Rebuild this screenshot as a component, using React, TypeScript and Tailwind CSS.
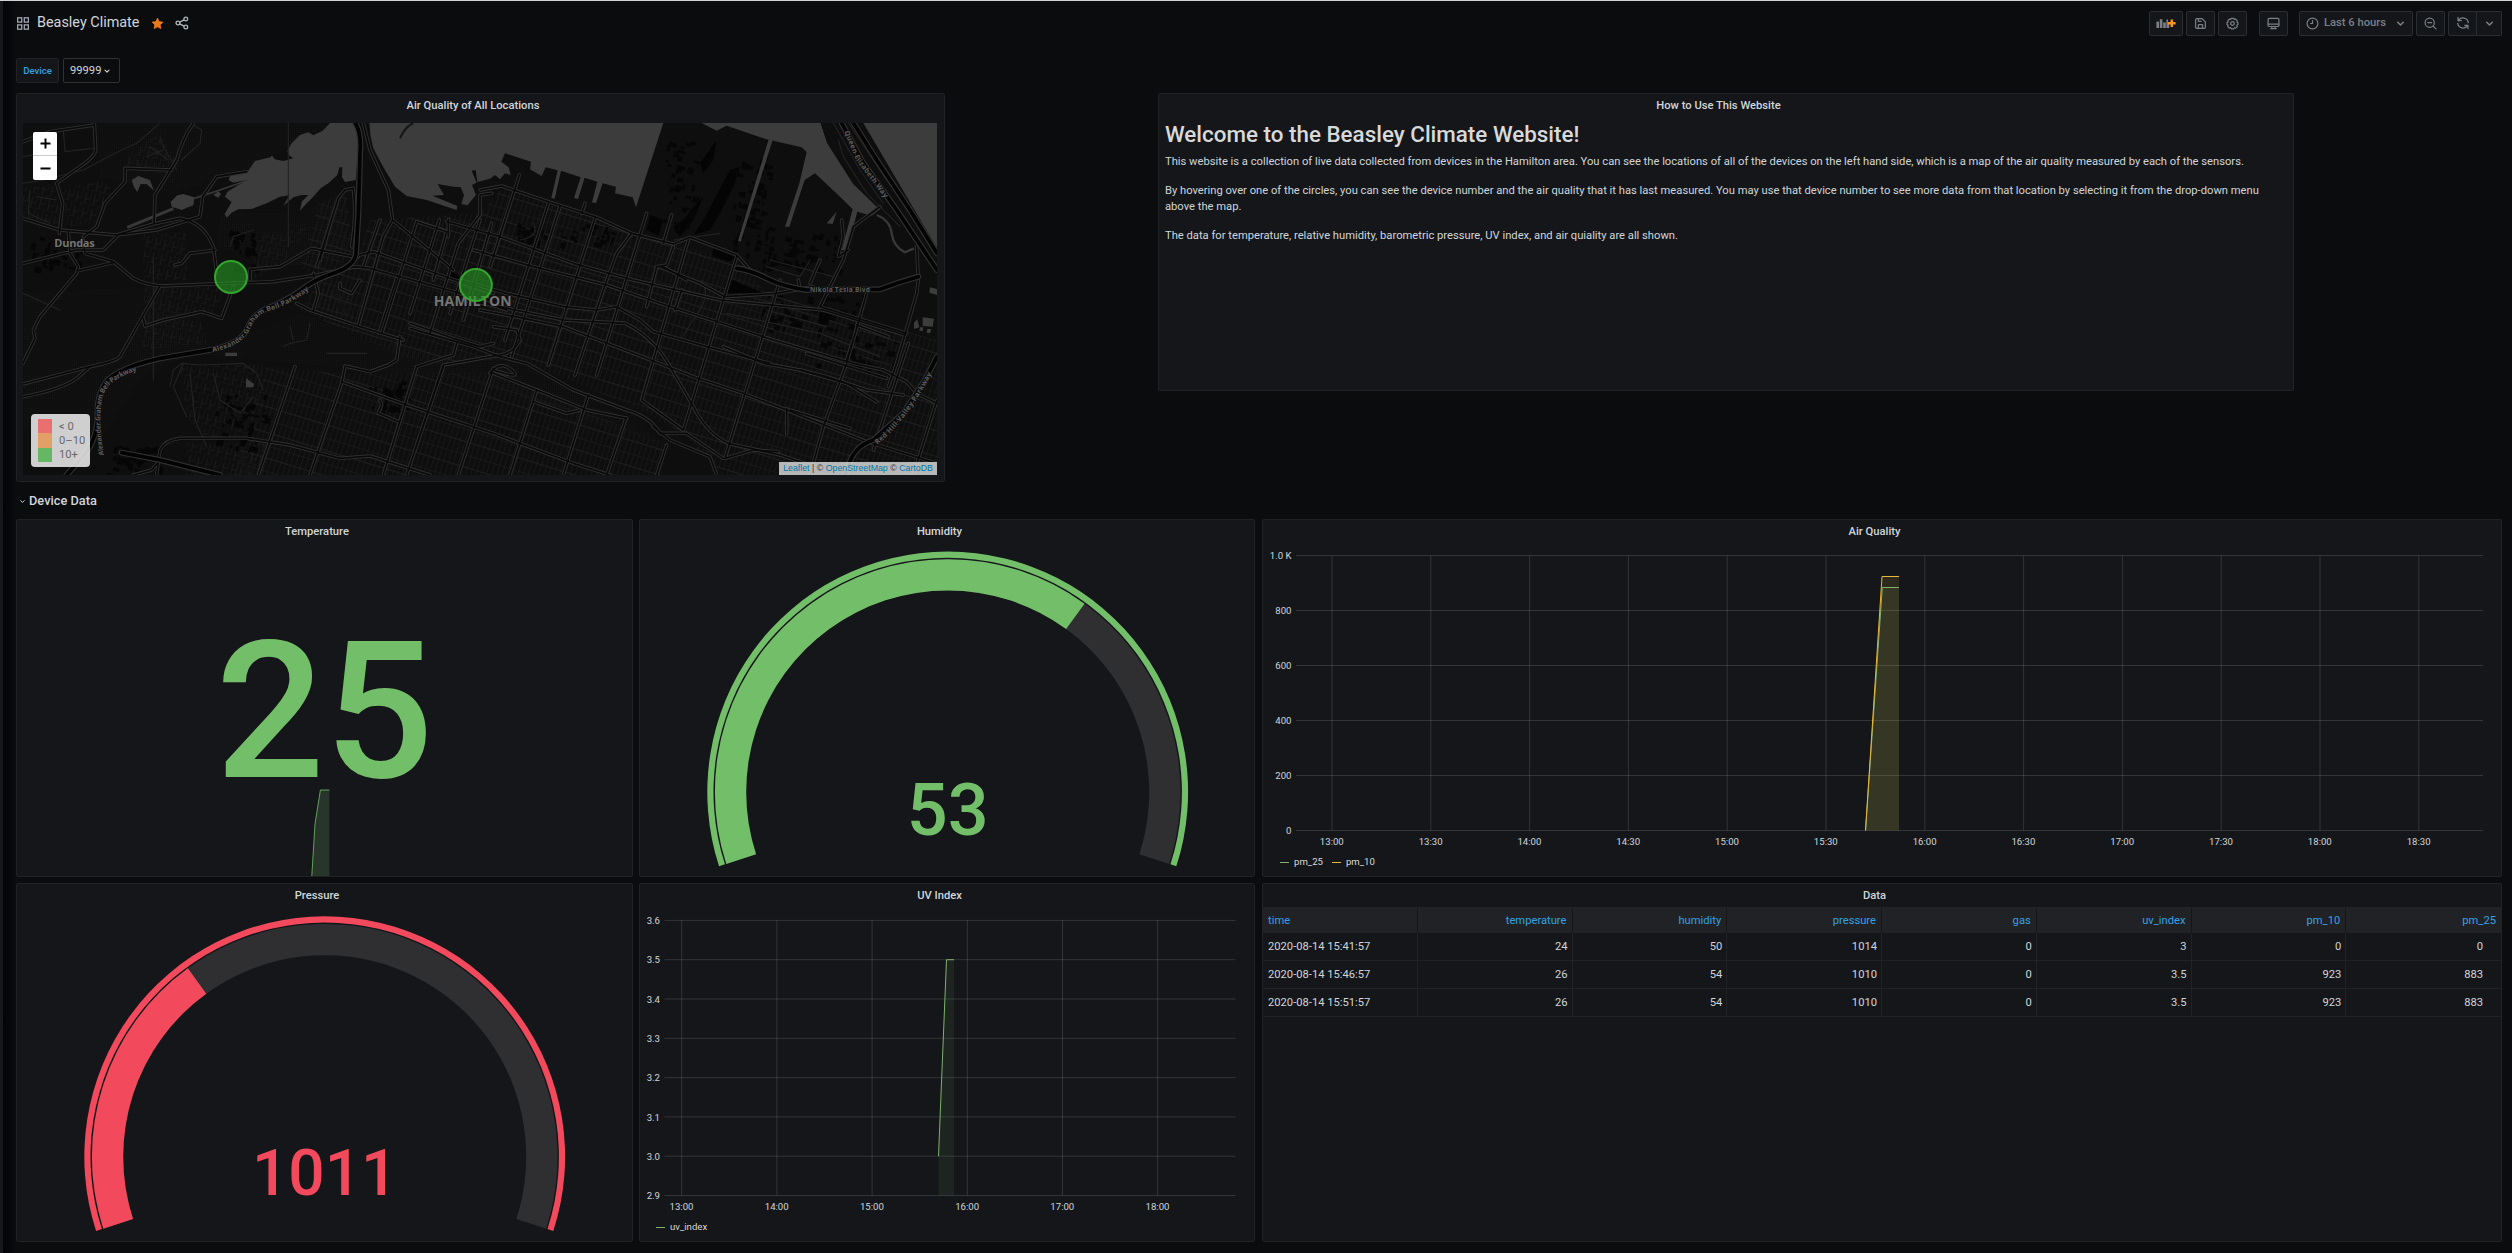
import React from "react";

/* ---------- icons ---------- */

type IconProps = { className?: string };

const AppsIcon = ({ className }: IconProps) => (
  <svg viewBox="0 0 12 13" className={className} fill="none" stroke="currentColor" strokeWidth="1.3">
    <rect x="0.6" y="0.8" width="4.1" height="4.3" />
    <rect x="7.3" y="0.8" width="4.1" height="4.3" />
    <rect x="0.6" y="7.9" width="4.1" height="4.3" />
    <rect x="7.3" y="7.9" width="4.1" height="4.3" />
  </svg>
);

const StarIcon = ({ className }: IconProps) => (
  <svg viewBox="0 0 24 24" className={className} fill="currentColor" stroke="currentColor" strokeWidth="1.6" strokeLinejoin="round">
    <path d="M12 2.2l2.9 6.4 7.1.9-5.2 4.8 1.3 7-6.1-3.4-6.1 3.4 1.3-7L2 9.5l7.1-.9z" />
  </svg>
);

const ShareIcon = ({ className }: IconProps) => (
  <svg viewBox="0 0 24 24" className={className} fill="none" stroke="currentColor" strokeWidth="2.2">
    <circle cx="18.5" cy="5" r="3.2" />
    <circle cx="18.5" cy="19" r="3.2" />
    <circle cx="5" cy="12" r="3.2" />
    <path d="M8 10.6l7.6-4M8 13.4l7.6 4" />
  </svg>
);

const ChevronIcon = ({ className }: IconProps) => (
  <svg viewBox="0 0 12 12" className={className} fill="none" stroke="currentColor" strokeWidth="1.7" strokeLinecap="round" strokeLinejoin="round">
    <path d="M3 4.6L6 7.6l3-3" />
  </svg>
);

const AddPanelIcon = ({ className }: IconProps) => (
  <svg viewBox="0 0 20 14" className={className}>
    <g fill="#7b8087">
      <rect x="0.4" y="5.6" width="2.6" height="6.4" />
      <rect x="3.8" y="3.2" width="2.6" height="8.8" />
      <rect x="7.2" y="6.4" width="2.6" height="5.6" />
      <path d="M10.4 3.4h1.6v3h1.2v5.6h-2.8z" />
    </g>
    <path d="M14.6 3.4h2.4v2.6h2.6v2.4H17V11h-2.4V8.400h-2.600V6h2.600z" fill="#f7941e" />
  </svg>
);

const SaveIcon = ({ className }: IconProps) => (
  <svg viewBox="0 0 24 24" className={className} fill="none" stroke="currentColor" strokeWidth="2.2" strokeLinejoin="round">
    <path d="M5 3h10l6 6v10a2 2 0 0 1-2 2H5a2 2 0 0 1-2-2V5a2 2 0 0 1 2-2z" />
    <path d="M8 3v5h6M8 21v-6a1 1 0 0 1 1-1h6a1 1 0 0 1 1 1v6" />
  </svg>
);

const GearIcon = ({ className }: IconProps) => (
  <svg viewBox="0 0 24 24" className={className} fill="none" stroke="currentColor" strokeWidth="2.2" strokeLinejoin="round">
    <path d="M9.700 2.500h4.600l1.200 2.100 2.400-.6 2.900 3-.7 2.400 1.900 1.300v3.200l-2 1.200.700 2.400-2.900 3-2.400-.7-1.200 2h-4.400l-1.300-2.100-2.400.700-2.900-3 .700-2.400-2-1.200v-3.200l2-1.200-.700-2.400 2.900-3 2.400.6z" />
    <circle cx="12" cy="12" r="3.400" />
  </svg>
);

const MonitorIcon = ({ className }: IconProps) => (
  <svg viewBox="0 0 24 24" className={className} fill="none" stroke="currentColor" strokeWidth="2.2" strokeLinejoin="round" strokeLinecap="round">
    <rect x="2" y="2.500" width="20" height="15" rx="2" />
    <path d="M2 13h20M9 18v3.500M15 18v3.500M7 21.500h10" />
  </svg>
);

const ClockIcon = ({ className }: IconProps) => (
  <svg viewBox="0 0 24 24" className={className} fill="none" stroke="currentColor" strokeWidth="2.2" strokeLinecap="round">
    <circle cx="12" cy="12" r="10" />
    <path d="M12 6.500V12H8.500" />
  </svg>
);

const ZoomOutIcon = ({ className }: IconProps) => (
  <svg viewBox="0 0 24 24" className={className} fill="none" stroke="currentColor" strokeWidth="2.2" strokeLinecap="round">
    <circle cx="10.500" cy="10.500" r="8.500" />
    <path d="M7 10.500h7M16.800 16.800L22 22" />
  </svg>
);

const SyncIcon = ({ className }: IconProps) => (
  <svg viewBox="0 0 24 24" className={className} fill="none" stroke="currentColor" strokeWidth="2.2" strokeLinecap="round" strokeLinejoin="round">
    <path d="M3.500 2.500v5.500H9M4.200 8a9 9 0 0 1 16.800 3.500M20.500 21.500V16H15M19.800 16A9 9 0 0 1 3 12.500" />
  </svg>
);

/* ---------- shared pieces ---------- */

function ToolButton({ className = "", children }: { className?: string; children: React.ReactNode }) {
  return (
    <div className={`flex h-[25px] items-center justify-center rounded-[2px] border border-[#2b2d31] bg-[#141619] text-[#7b8087] ${className}`}>
      {children}
    </div>
  );
}

function Panel({ title, className = "", children }: { title: string; className?: string; children?: React.ReactNode }) {
  return (
    <section className={`flex flex-col overflow-hidden rounded-[2px] border border-[#202226] bg-[#141619] ${className}`}>
      <h2 className="flex h-[24px] shrink-0 items-center justify-center pr-[15px] text-[11.2px] font-medium leading-none text-[#d0d6dc]">
        {title}
      </h2>
      {children}
    </section>
  );
}

/* ---------- map ---------- */

const WATER = [
  "M862 212L875 190 900 165 925 157 940 166 968 152 990 129H1060L1077 165 1072 240 1067 300 1035 306 1026 292 1027 262 1018 262 1012 285 985 310 962 325 940 350 918 372 900 392 905 365 925 345 905 345 880 352 850 378 868 346 840 350 800 370 755 387 715 388 695 398 680 413 674 402 695 366 675 350 682 335 740 300 700 308 686 300 690 288 745 272 765 243 812 232 816 226 824 238 850 243 880 235 866 225Z",
  "M1108 129L1112 170 1120 205 1150 262 1185 320 1220 348 1280 360 1370 390 1372 378 1298 347 1332 345 1313 312 1360 320 1382 322 1392 345 1384 372 1402 376 1428 345 1416 315 1430 308 1415 272 1427 270 1432 306 1470 296 1485 285 1500 298 1515 280 1532 285 1526 262 1504 245 1515 220 1593 245 1590 268 1625 288 1637 262 1673 271 1654 354 1664 356 1683 272 1742 292 1722 354 1734 357 1754 293 1792 305 1776 367 1788 370 1808 310 1848 320 1845 340 1898 352 1908 382 1990 129Z",
  "M2105 129L2150 152 2180 137 2300 178 2405 202 2420 216 2398 310 2355 440 2368 440 2414 300 2445 280 2520 350 2558 388 2525 510 2541 510 2572 395 2615 407 2640 388 2630 380 2560 312 2482 190 2462 129Z",
  "M2588 129H2811V505L2760 425 2690 315Z",
  "M512 366L532 346 550 342 583 352 580 376 545 390 515 380Z",
  "M395 300L415 288 450 300 462 332 440 312 422 312 412 336 402 322Z",
  "M2306 178L2318 180 2222 485 2214 482Z",
  "M640 345L655 334 663 342 655 353Z",
  "M2742 728L2752 718 2758 742 2742 747ZM2768 712L2802 716 2798 740 2768 738ZM2790 622L2811 627V645L2788 638ZM2760 742L2770 742 2768 754 2758 752ZM2782 746L2794 748 2790 760 2780 758Z",
  "M738 895L762 912 760 922 738 922ZM676 818H711V828H676ZM2480 430L2510 395 2498 432Z",
];

const DARK_AREAS = [
  "M2188 596L2290 640 2180 640Z",
  "M2140 505L2210 525 2190 545 2135 528Z",
  "M1950 405L1990 420 1975 465 1940 450Z",
  "M2020 440L2050 420 2080 380 2110 350 2080 420 2040 470Z",
  "M2160 400L2200 320 2220 260 2190 270 2110 420 2080 465 2130 450Z",
  "M2100 250L2150 180 2140 240 2110 280Z",
  "M2460 700L2490 700 2480 735 2455 730Z",
  "M1355 575L1380 590 1370 610 1350 600Z",
];

const HIGHWAYS = [
  "M1066 129Q1085 160 1080 220L1078 300 1075 400 1068 520Q1064 558 1000 580Q940 600 905 630Q850 668 790 690Q755 710 740 750Q720 790 640 808L480 835Q330 870 310 920Q290 960 293 1000Q295 1080 240 1140L200 1185",
  "M2525 129L2590 250 2690 390 2811 570",
  "M2560 129L2630 240 2730 390 2811 520",
  "M2210 565Q2250 570 2300 595T2420 630L2640 628Q2700 605 2755 590",
  "M2811 830L2775 900 2710 1000 2620 1080Q2560 1100 2545 1160L2535 1185",
  "M365 1118L480 1140 640 1180 660 1185",
];

const ROADS = [
  "M69 185L150 155 283 135M283 129L287 210Q285 230 240 260L170 310 188 370 178 460",
  "M580 129Q545 180 530 240L465 345 462 430M515 270L375 265 375 305 315 370 290 440 250 470",
  "M69 415L180 450 350 465 460 432 540 415Q610 425 640 500L650 580",
  "M350 465L470 450 600 410 608 350 650 290 740 275",
  "M69 550L230 510 310 510 350 470M205 455L210 520 235 560 230 580 120 710 100 750 105 775 69 850",
  "M250 480L255 520 340 545 400 595Q430 612 480 618L820 605 950 585 1065 560 1110 565 1380 640 1520 690",
  "M235 572L340 548M480 618L430 705 360 830Q345 845 270 860L69 912",
  "M69 950Q180 930 230 895L270 860M430 715L435 738 490 720 605 695 665 715 700 620",
  "M525 555L545 550 570 520 610 515 645 510M750 600L750 568 840 560 935 505 1060 530 1120 515 1220 550 1480 640",
  "M890 670L930 690 1080 740 1210 780M940 580L955 640 940 690M1020 610V625L1055 640 1080 600",
  "M1090 129L1110 210 1165 330 1178 420 1360 570M1178 420L1150 470 1075 735M1075 530L1060 500",
  "M1060 325L1035 330 1015 355 950 560M1060 325Q1070 400 1055 500M1000 400L960 540M1140 420L1090 560",
  "M1250 425L1145 760M1190 595L1140 750M1250 425L1340 455 1300 600M1318 420L1230 700M1345 418L1345 470",
  "M1475 340L1440 345V405L1375 490 1290 760M1440 420L1350 700M1475 430L1390 720",
  "M1440 330L1505 318 1645 365 1790 412 1895 460 2020 492 2070 472 2210 525 2250 570",
  "M1340 425L1500 470 1720 550 1900 600 2160 660 2470 690 2715 765",
  "M1420 510L1600 560 1820 615 1980 670 2320 780 2560 850 2650 870 2720 905 2750 940 2811 970",
  "M1380 600L1520 640 1690 680 1790 690 1850 680 1920 720 1960 755 2120 800 2310 850",
  "M1400 660L1545 690 1690 720 1875 730Q1960 770 2010 860L2080 980Q2120 1060 2185 1090L2340 1125 2460 1165",
  "M1230 730L1360 775 1440 800 1480 790M1480 740L1550 750 1560 780Q1540 820 1500 825L1330 855 1245 1110",
  "M1230 745L1420 800 1500 830 1580 850 1720 930 1880 990Q1950 1010 1980 1060L2060 1060 2170 1135",
  "M1440 690L1545 710 1690 740 1900 820 2080 890 2230 940 2360 990 2600 1085 2811 1150",
  "M1558 285L1470 560M1645 370L1515 780M1680 380L1535 830M1785 415L1645 855M1755 370L1745 400",
  "M1895 460L1850 520 1815 615 1725 885M1940 400L1790 885M2015 405L1990 490",
  "M2065 480L1925 960 2050 1050M2210 530L2050 1050M2340 600L2175 1135M2175 1135L2260 1110 2335 1115",
  "M2600 640L2540 850 2470 1040 2430 1185M2490 620L2460 680 2720 760M2580 715L2540 840",
  "M2360 985L2360 1060M2725 790L2620 1110M2640 380L2560 440 2530 540 2460 680",
  "M2750 500L2755 600 2750 640 2690 850 2665 920M2811 960L2740 1185M2400 870L2480 890 2600 930 2710 945",
  "M885 860L775 1185M1035 860L1025 910 930 1185M1200 770L1190 840 1165 855 1110 875 1035 858",
  "M1250 860L1150 1185M1330 860L1220 1185M1480 865L1375 1185M1610 930L1530 1185M1765 945L1690 1185",
  "M1878 1015L1820 1185M2000 1095L1970 1185M1250 860L1360 825 1370 790",
  "M1025 905L1220 975 1480 1060 1720 1150 1830 1185M1480 880L1610 930 1760 990 1880 1015",
  "M470 1185L480 1110Q495 1080 540 1075L740 1075 870 1095 1020 1135 1110 1128 1290 1185",
  "M400 1185L455 1170 480 1140M1140 960L1145 975 1135 1000 1195 1025M1470 880Q1500 840 1535 870T1480 870",
  "M1940 680L1970 560 2000 555 2020 500M1980 560L2100 610 2175 650 2330 640 2440 620",
  "M2045 630L2025 690M1990 560L2060 600M2170 800L2290 850 2400 870 2540 910 2630 965M2370 990L2550 1045",
  "M2420 820L2660 895M2570 735L2665 770M2395 600L2400 630M2460 540L2430 610M2525 420L2530 470 2515 530 2545 510",
  "M1600 965L1700 1000 1740 990M1960 1040L2010 1080 2130 1130 2150 1185",
];

const MINOR = [
  "M69 310L130 300 250 270 345 220 410 190 480 129M190 150L195 215 280 205M690 500L700 470 760 450",
  "M545 240L600 190 605 150 580 135M69 230L160 215M480 180L530 270M450 200L505 240M440 230L490 210M110 350L170 360M90 330L85 400 150 430",
  "M510 920L520 870 545 850 600 855 730 850 770 880 790 930M570 880L585 1020 620 1100M550 850L520 920 560 1010",
  "M640 880L660 960 720 1000 760 950M850 800L870 790 920 780 930 730M870 740L880 780M980 820L1100 820",
  "M2020 480L2160 460M2300 560L2400 590 2430 540M1600 430Q1620 470 1560 480M2310 540L2500 590M2105 600Q2130 640 2100 690L2040 780",
  "M2290 640L2460 690M2180 700L2460 760 2640 830M2300 690L2480 740M69 640L180 690M460 540V900M865 129V500",
  "M2515 180L2530 230 2600 340 2700 440M2545 129L2660 300 2790 470M2500 129L2580 270 2650 370",
];

/** Small deterministic generator so that the building footprints never move. */
function footprints(seed: number, n: number, x0: number, y0: number, w: number, h: number) {
  let s = seed;
  const rnd = () => {
    s = (s * 1103515245 + 12345) % 2147483648;
    return s / 2147483648;
  };
  return Array.from({ length: n }, () => ({
    x: Math.round(x0 + rnd() * w),
    y: Math.round(y0 + rnd() * h),
    w: Math.round(5 + rnd() * 16),
    h: Math.round(5 + rnd() * 16),
  }));
}

const BUILDINGS = [
  ...footprints(7, 60, 2290, 640, 300, 110),
  ...footprints(11, 70, 2200, 220, 110, 300),
  ...footprints(23, 50, 2290, 460, 230, 110),
  ...footprints(31, 40, 1990, 180, 100, 260),
  ...footprints(43, 30, 690, 450, 80, 120),
  ...footprints(51, 40, 640, 940, 160, 160),
  ...footprints(67, 36, 1110, 900, 110, 110),
  ...footprints(71, 40, 1540, 430, 300, 60),
  ...footprints(83, 30, 90, 470, 160, 90),
  ...footprints(97, 36, 320, 1090, 160, 90),
  ...footprints(101, 40, 2450, 760, 260, 110),
];

function CityMap() {
  return (
    <svg viewBox="69 129 2742 1056" className="block h-[352px] w-[914px]">
      <defs>
        <pattern id="blocks" width="15" height="74" patternUnits="userSpaceOnUse" patternTransform="rotate(17)">
          <path d="M0 0V74M0 0H15M0 37H15" stroke="#1f1f1f" strokeWidth="3" />
        </pattern>
        <pattern id="suburb" width="26" height="44" patternUnits="userSpaceOnUse" patternTransform="rotate(12)">
          <path d="M0 0V30M0 0H20M13 14V44M13 30H26" stroke="#1a1a1a" strokeWidth="3" fill="none" />
        </pattern>
        <pattern id="woods" width="6" height="6" patternUnits="userSpaceOnUse">
          <rect width="3" height="3" fill="#141414" />
        </pattern>
        <path id="label-west" d="M312 1125Q298 1050 302 990Q305 930 340 905T450 860" />
        <path id="label-mid" d="M638 816Q720 800 745 757Q765 706 803 694Q865 677 930 628" />
        <path id="label-qew" d="M2533 155L2568 240 2660 362" />
        <path id="label-redhill" d="M2632 1094Q2722 1022 2802 868" />
      </defs>
      <rect x="69" y="129" width="2742" height="1056" fill="#0e0e0e" />
      <path d="M290 129H990L740 270 520 340 300 290ZM660 400L900 400 1040 330V540L850 560 650 500ZM1100 780L1600 850 2060 1130 2000 1100 1400 900 560 820 420 900 300 1080 69 1040V640L480 620 640 810 900 700Z" fill="url(#woods)" />
      <path d="M69 320L160 320 190 440 69 410ZM380 230L480 160 540 260 380 262ZM430 460L560 460 560 600 430 600ZM430 620L690 620 640 700 440 740ZM540 860L790 850 760 1080 620 1080 560 1010ZM560 1090L800 1090 770 1185H560ZM430 740L600 710 620 790 430 810ZM770 470L930 440 840 560 750 600ZM190 330L300 300 340 330 290 430 200 440ZM950 600L1050 640 1060 720 950 680Z" fill="url(#suburb)" />
      <path d="M960 360L1040 350 1060 520 960 600 900 560ZM1110 420L1440 400 1510 320 1900 460 2210 540 2300 640 2811 780V1185H2160L2050 1060 1900 980 1560 840 1440 840 1360 860 1210 830 900 690 960 600 1060 560ZM800 860L1030 880 1480 880 1600 930 1990 1090V1185H700Z" fill="url(#blocks)" />
      {DARK_AREAS.map((d) => (
        <path key={d} d={d} fill="#040404" />
      ))}
      {BUILDINGS.map((b, i) => (
        <rect key={i} x={b.x} y={b.y} width={b.w} height={b.h} fill="#060606" transform={`rotate(17 ${b.x} ${b.y})`} />
      ))}
      {WATER.map((d) => (
        <path key={d} d={d} fill="#3c3c3c" />
      ))}
      <g fill="none" stroke="#383838">
        <path d="M382 442L520 386" strokeWidth="9" />
        <path d="M583 355L660 330 745 300M620 338L652 290 700 280" strokeWidth="5" />
        <path d="M2630 405Q2670 420 2675 460T2715 517L2742 505" strokeWidth="7" />
      </g>
      <path d="M1200 175Q1215 140 1240 129" fill="none" stroke="#161616" strokeWidth="6" />
      <path d="M2462 129L2482 190 2560 312 2640 385 2755 500 2811 575V505L2590 129Z" fill="#0e0e0e" />
      <g fill="none" strokeLinejoin="round" strokeLinecap="round">
        {MINOR.map((d) => (
          <path key={d} d={d} stroke="#222222" strokeWidth="3.500" />
        ))}
        {ROADS.map((d) => (
          <path key={d} d={d} stroke="#303030" strokeWidth="10.500" />
        ))}
        {ROADS.map((d) => (
          <path key={d} d={d} stroke="#090909" strokeWidth="5" />
        ))}
        {HIGHWAYS.map((d) => (
          <path key={d} d={d} stroke="#303030" strokeWidth="18" />
        ))}
        {HIGHWAYS.map((d) => (
          <path key={d} d={d} stroke="#030303" strokeWidth="11" />
        ))}
      </g>
      <g fill="#5c5c5c" stroke="#0e0e0e" strokeWidth="5" paintOrder="stroke" fontFamily="'Open Sans', sans-serif" fontSize="21" fontWeight="700">
        <text><textPath href="#label-west" textLength="310">Alexander Graham Bell Parkway</textPath></text>
        <text><textPath href="#label-mid" textLength="355">Alexander Graham Bell Parkway</textPath></text>
        <text><textPath href="#label-qew" textLength="235">Queen Elizabeth Way</textPath></text>
        <text><textPath href="#label-redhill" textLength="270">Red Hill Valley Parkway</textPath></text>
        <text x="2430" y="637" fontSize="20" textLength="180">Nikola Tesla Blvd</text>
      </g>
      <g fill="#757575" stroke="#0e0e0e" strokeWidth="3" paintOrder="stroke" fontFamily="'Open Sans', sans-serif" fontWeight="700">
        <text x="163" y="500" fontSize="33" textLength="121">Dundas</text>
        <text x="1301" y="677" fontSize="42" textLength="234">HAMILTON</text>
      </g>
      <g fill="#299c26" fillOpacity="0.600" stroke="#33a52d" strokeWidth="6">
        <circle cx="693" cy="591" r="48" />
        <circle cx="1427.500" cy="615" r="48" />
      </g>
    </svg>
  );
}

const LEGEND = [
  { color: "bg-[#ea6f6f]", label: "< 0" },
  { color: "bg-[#e2a066]", label: "0–10" },
  { color: "bg-[#66b763]", label: "10+" },
];

function MapPanel() {
  return (
    <Panel title="Air Quality of All Locations" className="h-[389px] w-[929px]">
      <div className="relative ml-[6px] mt-[5px] h-[352px] w-[914px] overflow-hidden">
        <CityMap />
        <div className="absolute left-[10px] top-[9px] flex h-[48px] w-[24px] flex-col overflow-hidden rounded-[2px] bg-white">
          <div className="flex h-[24px] items-center justify-center border-b border-[#ccc]">
            <svg viewBox="0 0 11 11" className="h-[11px] w-[11px]" stroke="#000" strokeWidth="2"><path d="M0.500 5.500h10M5.500 0.500v10" /></svg>
          </div>
          <div className="flex h-[24px] items-center justify-center">
            <svg viewBox="0 0 11 11" className="h-[11px] w-[11px]" stroke="#000" strokeWidth="2"><path d="M0.500 5.500h10" /></svg>
          </div>
        </div>
        <div className="absolute bottom-[8px] left-[8px] flex h-[53px] w-[59px] flex-col justify-center rounded-[4px] bg-white/80 pl-[7px]">
          {LEGEND.map((l) => (
            <div key={l.label} className="flex h-[14.400px] items-center">
              <span className={`h-full w-[14px] ${l.color}`} />
              <span className="ml-[7px] text-[11.200px] leading-none text-[#686868]">{l.label}</span>
            </div>
          ))}
        </div>
        <div className="absolute bottom-0 right-0 flex h-[13px] w-[158px] items-center justify-center whitespace-pre bg-white/70 font-['Liberation_Sans'] text-[8.800px] leading-none text-[#333]">
          <span className="text-[#0078a8]">Leaflet</span> | © <span className="text-[#0078a8]">OpenStreetMap</span> © <span className="text-[#0078a8]">CartoDB</span>
        </div>
      </div>
    </Panel>
  );
}

/* ---------- gauges ---------- */

function ring(cx: number, cy: number, outer: number, inner: number, from: number, to: number) {
  const pt = (r: number, deg: number) => {
    const a = ((162 + deg) * Math.PI) / 180;
    return `${(cx + r * Math.cos(a)).toFixed(2)} ${(cy + r * Math.sin(a)).toFixed(2)}`;
  };
  const large = to - from > 180 ? 1 : 0;
  return `M${pt(outer, from)}A${outer} ${outer} 0 ${large} 1 ${pt(outer, to)}L${pt(inner, to)}A${inner} ${inner} 0 ${large} 0 ${pt(inner, from)}Z`;
}

function Gauge({ value, sweep, color, fontSize, cy, textY, height }: { value: string; sweep: number; color: string; fontSize: number; cy: number; textY: number; height: number }) {
  const cx = 307.7;
  return (
    <svg viewBox={`0 0 615 ${height}`} className="block w-[615px] flex-1">
      <path d={ring(cx, cy, 240.4, 234.2, 0, 216)} fill={color} />
      <path d={ring(cx, cy, 232.800, 201.500, 0, 216)} fill="#2f2f32" />
      <path d={ring(cx, cy, 232.800, 201.500, 0, sweep)} fill={color} />
      <text x={cx} y={textY} textAnchor="middle" fill={color} fontSize={fontSize} fontWeight="500">
        {value}
      </text>
    </svg>
  );
}

/* ---------- time series ---------- */

type ChartProps = {
  box: [number, number, number, number];
  className: string;
  left: number;
  right: number;
  yTicks: { y: number; label: string }[];
  xTicks: { x: number; label: string }[];
  labelY: number;
  children?: React.ReactNode;
};

function Chart({ box, className, left, right, yTicks, xTicks, labelY, children }: ChartProps) {
  const top = yTicks[yTicks.length - 1].y;
  const bottom = yTicks[0].y;
  return (
    <svg viewBox={box.join(" ")} className={className}>
      <g stroke="#c8c8c8" strokeOpacity="0.170">
        {yTicks.map((t) => (
          <path key={t.label} d={`M${left} ${t.y}H${right}`} />
        ))}
        {xTicks.map((t) => (
          <path key={t.label} d={`M${t.x} ${top}V${bottom}`} />
        ))}
      </g>
      {children}
      <g fill="#d0d6dc" fontSize="9.600">
        {yTicks.map((t) => (
          <text key={t.label} x={left - 4.500} y={t.y + 3.600} textAnchor="end">{t.label}</text>
        ))}
        {xTicks.map((t) => (
          <text key={t.label} x={t.x - 0.200} y={labelY} textAnchor="middle">{t.label}</text>
        ))}
      </g>
    </svg>
  );
}

const AIR_Y = ["0", "200", "400", "600", "800", "1.0 K"].map((label, i) => ({ label, y: 830.5 - i * 55 }));
const AIR_X = ["13:00", "13:30", "14:00", "14:30", "15:00", "15:30", "16:00", "16:30", "17:00", "17:30", "18:00", "18:30"].map(
  (label, i) => ({ label, x: 1332 + i * 98.800 })
);
const UV_Y = ["2.9", "3.0", "3.1", "3.2", "3.3", "3.4", "3.5", "3.6"].map((label, i) => ({ label, y: 1195.5 - i * 39.300 }));
const UV_X = ["13:00", "14:00", "15:00", "16:00", "17:00", "18:00"].map((label, i) => ({ label, x: 681.700 + i * 95.200 }));

function LegendItem({ color, label }: { color: string; label: string }) {
  return (
    <div className="flex items-center gap-[5px] text-[9.600px] leading-none text-[#d8d9da]">
      <span className={`h-px w-[9px] ${color}`} />
      <span>{label}</span>
    </div>
  );
}

function AirQualityPanel() {
  return (
    <Panel title="Air Quality" className="h-[358px] w-[1240px]">
      <Chart box={[1263, 544, 1238, 311]} className="block h-[311px] w-[1238px]" left={1296} right={2483} yTicks={AIR_Y} xTicks={AIR_X} labelY={845.2}>
        <path d="M1865.500 830.500L1882 587.500H1899V830.500Z" fill="#7eb26d" fillOpacity="0.100" />
        <path d="M1865.500 830.500L1882 576.500H1899V830.500Z" fill="#eab839" fillOpacity="0.120" />
        <path d="M1865.500 830.500L1882.300 587.500H1899" fill="none" stroke="#7eb26d" />
        <path d="M1865.500 830.500L1882 576.500H1899" fill="none" stroke="#eab839" />
      </Chart>
      <div className="flex h-[14px] items-center gap-[9px] pl-[17px]">
        <LegendItem color="bg-[#7eb26d]" label="pm_25" />
        <LegendItem color="bg-[#eab839]" label="pm_10" />
      </div>
    </Panel>
  );
}

function UvPanel() {
  return (
    <Panel title="UV Index" className="h-[359px] w-[616px]">
      <Chart box={[640, 908, 614, 312]} className="block h-[312px] w-[614px]" left={664.500} right={1235.500} yTicks={UV_Y} xTicks={UV_X} labelY={1210.2}>
        <path d="M938.500 1156.200L946.500 959.700H954V1195.500H938.500Z" fill="#7eb26d" fillOpacity="0.100" />
        <path d="M938.500 1156.200L946.500 959.700H954" fill="none" stroke="#7eb26d" />
      </Chart>
      <div className="flex h-[14px] items-center pl-[16px]">
        <LegendItem color="bg-[#7eb26d]" label="uv_index" />
      </div>
    </Panel>
  );
}

/* ---------- table ---------- */

const COLUMNS = ["time", "temperature", "humidity", "pressure", "gas", "uv_index", "pm_10", "pm_25"];
const ROWS = [
  ["2020-08-14 15:41:57", "24", "50", "1014", "0", "3", "0", "0"],
  ["2020-08-14 15:46:57", "26", "54", "1010", "0", "3.5", "923", "883"],
  ["2020-08-14 15:51:57", "26", "54", "1010", "0", "3.5", "923", "883"],
];

function DataPanel() {
  return (
    <Panel title="Data" className="h-[359px] w-[1240px]">
      <div className="-mt-px flex flex-col text-[11.200px] leading-none">
        <div className="grid h-[26px] grid-cols-8 bg-[#202226] pt-px text-[#33a2e5]">
          {COLUMNS.map((c, i) => (
            <div key={c} className={`flex items-center px-[5px] ${i === 0 ? "" : "justify-end"} ${i < 7 ? "border-r border-[#141619]" : ""}`}>{c}</div>
          ))}
        </div>
        {ROWS.map((r) => (
          <div key={r[0]} className="grid h-[28px] grid-cols-8 border-b border-[#202226] text-[#d0d6dc]">
            {r.map((v, i) => (
              <div key={i} className={`flex items-center ${i === 0 ? "pl-[5px]" : "justify-end"} ${i < 7 ? "border-r border-[#202226] pr-[4px]" : "pr-[18px]"}`}>{v}</div>
            ))}
          </div>
        ))}
      </div>
    </Panel>
  );
}

/* ---------- page ---------- */

export default function App() {
  return (
    <div className="flex h-[1253px] w-[2512px] overflow-hidden border-t border-[#d0d3d4] bg-[#0b0c0e] font-['Roboto',sans-serif] text-[#d0d6dc]">
      <div className="w-[3px] shrink-0 bg-[#17181b]" />
      <div className="w-[13px] shrink-0 bg-linear-to-r from-[#040405] to-[#0b0c0e]" />
      <main className="flex w-[2486px] flex-col">
        <header className="flex h-[43px] items-center justify-between pt-[1px]">
          <div className="flex items-center">
            <AppsIcon className="ml-[1px] h-[13px] w-[12px] text-[#9fa7b3]" />
            <h1 className="ml-[8px] mt-[1px] text-[14.400px] leading-none">Beasley Climate</h1>
            <StarIcon className="ml-[12px] h-[13px] w-[13px] text-[#eb7b18]" />
            <ShareIcon className="ml-[11px] h-[14px] w-[14px] text-[#b4bac1]" />
          </div>
          <div className="flex items-center">
            <ToolButton className="w-[34px]"><AddPanelIcon className="h-[14px] w-[20px]" /></ToolButton>
            <ToolButton className="ml-[3px] w-[29px]"><SaveIcon className="h-[13px] w-[13px]" /></ToolButton>
            <ToolButton className="ml-[3px] w-[29px]"><GearIcon className="h-[13px] w-[13px]" /></ToolButton>
            <ToolButton className="ml-[12px] w-[29px]"><MonitorIcon className="h-[13px] w-[13px]" /></ToolButton>
            <ToolButton className="ml-[11px] w-[114px]">
              <ClockIcon className="h-[13px] w-[13px]" />
              <span className="ml-[5px] text-[11.200px] font-medium leading-none">Last 6 hours</span>
              <ChevronIcon className="ml-[9px] h-[11px] w-[11px]" />
            </ToolButton>
            <ToolButton className="ml-[3px] w-[29px]"><ZoomOutIcon className="h-[13px] w-[13px]" /></ToolButton>
            <ToolButton className="ml-[3px] w-[29px] rounded-r-none"><SyncIcon className="h-[14px] w-[14px]" /></ToolButton>
            <ToolButton className="w-[25px] rounded-l-none border-l-0"><ChevronIcon className="h-[11px] w-[11px]" /></ToolButton>
          </div>
        </header>

        <div className="mt-[14px] flex gap-[4px]">
          <div className="flex h-[25px] w-[43px] items-center justify-center rounded-[2px] border border-[#202226] bg-[#141619] text-[9.600px] font-medium leading-none text-[#33a2e5]">
            Device
          </div>
          <div className="flex h-[25px] w-[57px] items-center rounded-[2px] border border-[#2c3235] pl-[6px] text-[11.200px] leading-none">
            99999
            <ChevronIcon className="ml-[2px] h-[8px] w-[8px]" />
          </div>
        </div>

        <div className="mt-[10px] flex items-start gap-[213px]">
          <MapPanel />
          <Panel title="How to Use This Website" className="h-[298px] w-[1136px]">
            <div className="px-[6px] text-[11.200px] leading-[16px] text-[#d0d6dc]">
              <h1 className="mb-[4px] mt-px text-[22.400px] font-medium leading-[31px] text-[#d8d9da]">Welcome to the Beasley Climate Website!</h1>
              <p className="mb-[13px]">
                This website is a collection of live data collected from devices in the Hamilton area. You can see the locations of all of the devices on the left hand side, which is a map of the air quality measured by each of the sensors.
              </p>
              <p className="mb-[13px]">
                By hovering over one of the circles, you can see the device number and the air quality that it has last measured. You may use that device number to see more data from that location by selecting it from the drop-down menu above the map.
              </p>
              <p>The data for temperature, relative humidity, barometric pressure, UV index, and air quiality are all shown.</p>
            </div>
          </Panel>
        </div>

        <div className="flex h-[37px] items-center pl-[3px] pt-px text-[12.800px] font-medium leading-none">
          <ChevronIcon className="mr-[3px] h-[7px] w-[7px]" />
          Device Data
        </div>

        <div className="flex gap-[6px]">
          <Panel title="Temperature" className="h-[358px] w-[617px]">
            <svg viewBox="17 544 615 332" className="block h-[332px] w-[615px]">
              <path d="M311.800 876L315 824 320.400 790H329.400V876Z" fill="#28352a" />
              <path d="M311.800 876L315 824 320.400 790H329.400" fill="none" stroke="#73bf69" strokeOpacity="0.800" />
              <text x="324.500" y="776.500" textAnchor="middle" fill="#73bf69" fontSize="192" fontWeight="500">25</text>
            </svg>
          </Panel>
          <Panel title="Humidity" className="h-[358px] w-[616px]">
            <Gauge value="53" sweep={144} color="#73bf69" fontSize={72} cy={248} textY={291} height={332} />
          </Panel>
          <div className="ml-[1px]"><AirQualityPanel /></div>
        </div>

        <div className="mt-[6px] flex gap-[6px]">
          <Panel title="Pressure" className="h-[359px] w-[617px]">
            <Gauge value="1011" sweep={72} color="#f2495c" fontSize={64} cy={248.700} textY={287} height={333} />
          </Panel>
          <UvPanel />
          <div className="ml-[1px]"><DataPanel /></div>
        </div>
      </main>
    </div>
  );
}
